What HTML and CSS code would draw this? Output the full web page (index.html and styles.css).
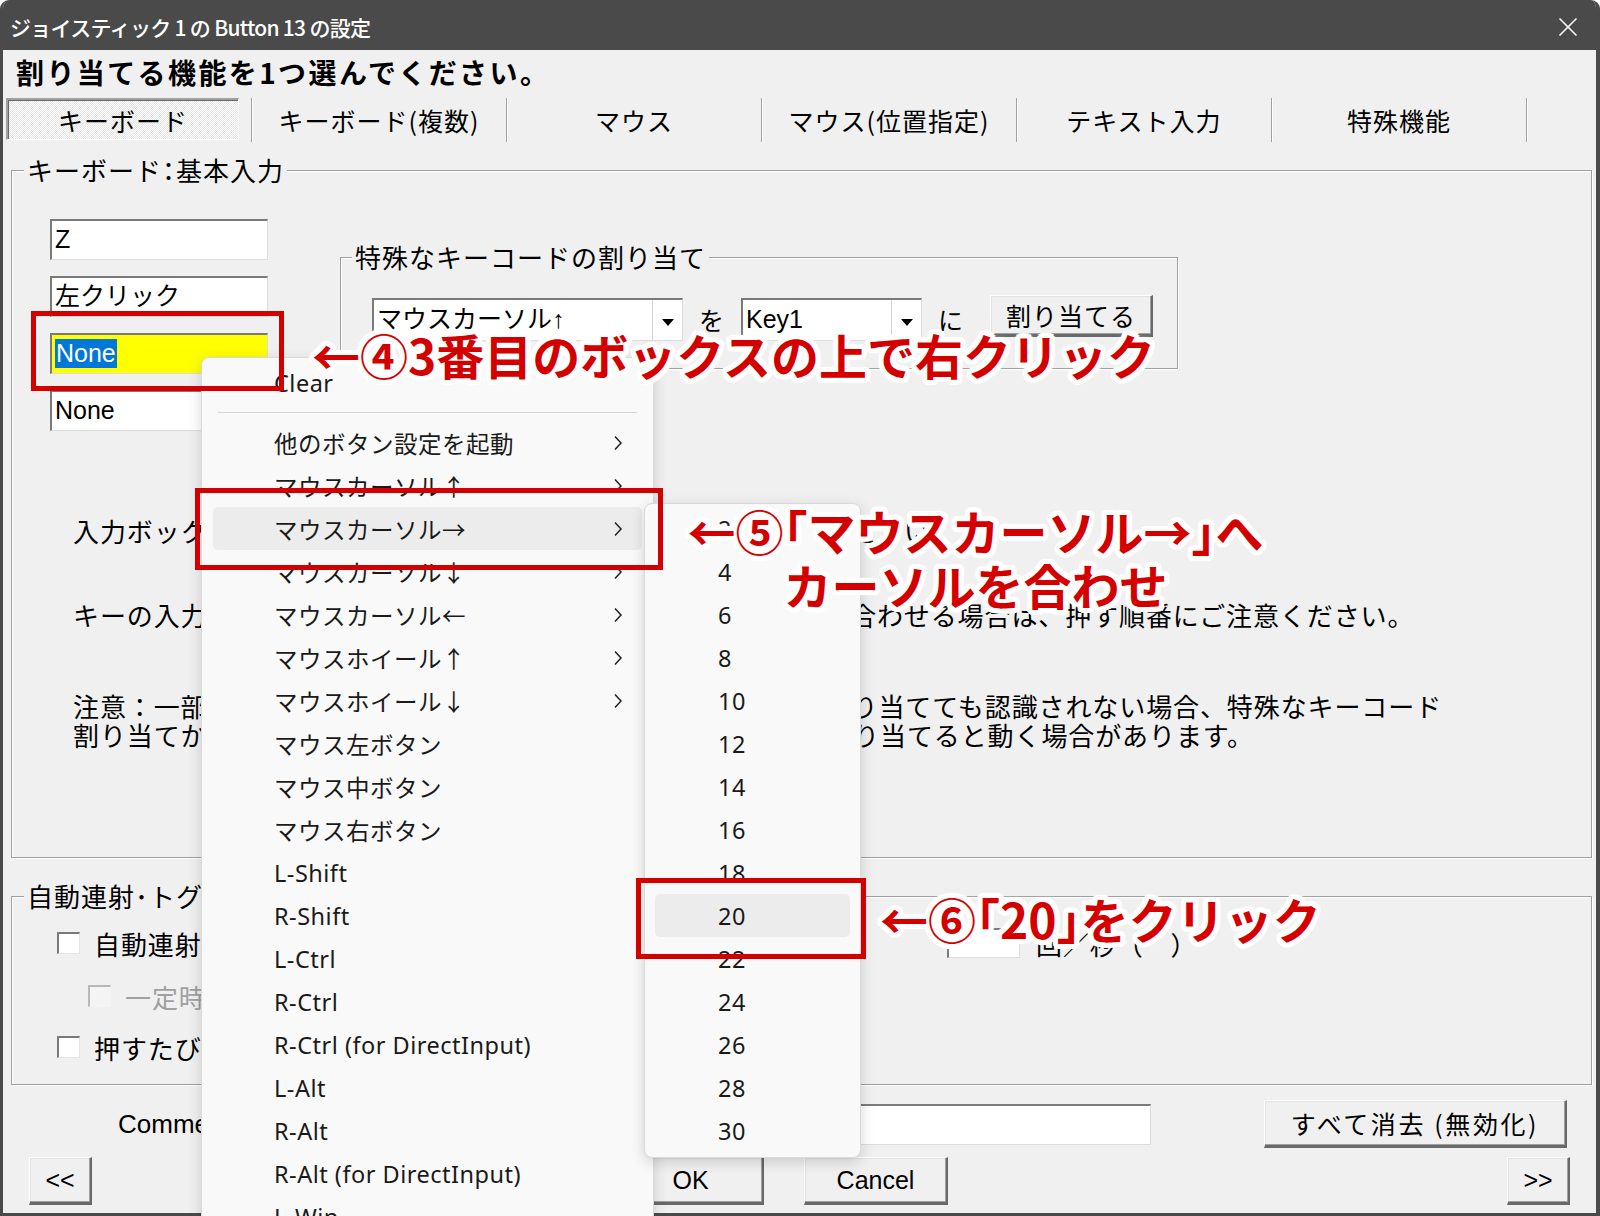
FILE: index.html
```html
<!DOCTYPE html>
<html lang="ja">
<head>
<meta charset="utf-8">
<title>ジョイスティック 1 の Button 13 の設定</title>
<link rel="stylesheet" href="styles.css">
</head>
<body>
<div class="window">
  <div class="titlebar">
    <span class="title">ジョイスティック 1 の Button 13 の設定</span>
    <svg class="close" width="20" height="20" viewBox="0 0 20 20"><path d="M1.5 1.5 L18.5 18.5 M18.5 1.5 L1.5 18.5" stroke="#fff" stroke-width="1.6" fill="none"/></svg>
  </div>
  <div class="client">
    <h1 class="heading">割り当てる機能を1つ選んでください。</h1>
    <div class="tabs">
      <div class="tab first"><span class="tab-sel">キーボード</span></div>
      <div class="tab">キーボード(複数)</div>
      <div class="tab">マウス</div>
      <div class="tab">マウス(位置指定)</div>
      <div class="tab">テキスト入力</div>
      <div class="tab">特殊機能</div>
    </div>

    <fieldset class="group main-group">
      <legend>キーボード<span class="hw">：</span>基本入力</legend>
      <div class="top-row">
        <div class="key-inputs">
          <div class="field">Z</div>
          <div class="field">左クリック</div>
          <div class="field yellow"><span class="sel">None</span></div>
          <div class="field">None</div>
        </div>
        <fieldset class="group special">
          <legend>特殊なキーコードの割り当て</legend>
          <div class="special-row">
            <div class="combo c1"><span class="val">マウスカーソル↑</span><span class="drop"><svg width="12" height="7" viewBox="0 0 12 7"><path d="M0 0 H12 L6 7 Z" fill="#000"/></svg></span></div>
            <span class="conj">を</span>
            <div class="combo c2"><span class="val">Key1</span><span class="drop"><svg width="12" height="7" viewBox="0 0 12 7"><path d="M0 0 H12 L6 7 Z" fill="#000"/></svg></span></div>
            <span class="conj">に</span>
            <button class="btn assign">割り当てる</button>
          </div>
        </fieldset>
      </div>
      <div class="notes">
        <p class="note n1">入力ボックスをクリックしてから、割り当てたいキーを押してください。</p>
        <p class="note n2">キーの入力は順番が重要です。複数のキーを同時押しなどで組み合わせる場合は、押す順番にご注意ください。</p>
        <p class="note n3">注意：一部のゲームでは、上の入力ボックスで普通にキーを再割り当てても認識されない場合、特殊なキーコード<br>割り当てから別のキーコードを選び、そのキーコードをキーに割り当てると動く場合があります。</p>
      </div>
    </fieldset>

    <fieldset class="group auto-group">
      <legend>自動連射･トグル設定</legend>
      <div class="ck-row r1">
        <span class="ck"></span>
        <span class="ck-text wide">自動連射（連打）を有効にする</span>
        <span class="small-field"></span>
        <span class="ck-after">回／秒（　）</span>
      </div>
      <div class="ck-row r2 disabled">
        <span class="ck"></span>
        <span class="ck-text">一定時間押し続けたときだけ連射する</span>
      </div>
      <div class="ck-row r3">
        <span class="ck"></span>
        <span class="ck-text">押すたびにオン・オフを切り替える（トグル）</span>
      </div>
    </fieldset>

    <div class="comment-row">
      <span class="comment-label">Comment:</span>
      <span class="field comment-field"></span>
      <button class="btn clear-all">すべて消去 (無効化)</button>
    </div>

    <div class="bottom-row">
      <button class="btn nav prev">&lt;&lt;</button>
      <button class="btn ok">OK</button>
      <button class="btn cancel">Cancel</button>
      <button class="btn nav next">&gt;&gt;</button>
    </div>
  </div>
</div>

<div class="menu ctx">
  <div class="mi">Clear</div>
  <div class="sep"></div>
  <div class="mi">他のボタン設定を起動<svg class="chev" width="10" height="16" viewBox="0 0 10 16"><path d="M2 1.5 L8 8 L2 14.5" stroke="#222" stroke-width="1.5" fill="none"/></svg></div>
  <div class="mi">マウスカーソル↑<svg class="chev" width="10" height="16" viewBox="0 0 10 16"><path d="M2 1.5 L8 8 L2 14.5" stroke="#222" stroke-width="1.5" fill="none"/></svg></div>
  <div class="mi hl">マウスカーソル→<svg class="chev" width="10" height="16" viewBox="0 0 10 16"><path d="M2 1.5 L8 8 L2 14.5" stroke="#222" stroke-width="1.5" fill="none"/></svg></div>
  <div class="mi">マウスカーソル↓<svg class="chev" width="10" height="16" viewBox="0 0 10 16"><path d="M2 1.5 L8 8 L2 14.5" stroke="#222" stroke-width="1.5" fill="none"/></svg></div>
  <div class="mi">マウスカーソル←<svg class="chev" width="10" height="16" viewBox="0 0 10 16"><path d="M2 1.5 L8 8 L2 14.5" stroke="#222" stroke-width="1.5" fill="none"/></svg></div>
  <div class="mi">マウスホイール↑<svg class="chev" width="10" height="16" viewBox="0 0 10 16"><path d="M2 1.5 L8 8 L2 14.5" stroke="#222" stroke-width="1.5" fill="none"/></svg></div>
  <div class="mi">マウスホイール↓<svg class="chev" width="10" height="16" viewBox="0 0 10 16"><path d="M2 1.5 L8 8 L2 14.5" stroke="#222" stroke-width="1.5" fill="none"/></svg></div>
  <div class="mi">マウス左ボタン</div>
  <div class="mi">マウス中ボタン</div>
  <div class="mi">マウス右ボタン</div>
  <div class="mi">L-Shift</div>
  <div class="mi">R-Shift</div>
  <div class="mi">L-Ctrl</div>
  <div class="mi">R-Ctrl</div>
  <div class="mi">R-Ctrl (for DirectInput)</div>
  <div class="mi">L-Alt</div>
  <div class="mi">R-Alt</div>
  <div class="mi">R-Alt (for DirectInput)</div>
  <div class="mi">L-Win</div>
</div>

<div class="menu sub">
  <div class="mi">2</div>
  <div class="mi">4</div>
  <div class="mi">6</div>
  <div class="mi">8</div>
  <div class="mi">10</div>
  <div class="mi">12</div>
  <div class="mi">14</div>
  <div class="mi">16</div>
  <div class="mi">18</div>
  <div class="mi hl">20</div>
  <div class="mi">22</div>
  <div class="mi">24</div>
  <div class="mi">26</div>
  <div class="mi">28</div>
  <div class="mi">30</div>
</div>

<div class="rbox b1"></div>
<div class="rbox b2"></div>
<div class="rbox b3"></div>

<div class="ann a1">←④3番目のボックスの上で右クリック</div>
<div class="ann a2">←⑤<span class="hw">「</span>マウスカーソル→<span class="hw">」</span>へ<br>カーソルを合わせ</div>
<div class="ann a3">←⑥<span class="hw">「</span>20<span class="hw">」</span>をクリック</div>
</body>
</html>
```

FILE: styles.css
```css
* { box-sizing: border-box; }
html, body { margin: 0; padding: 0; }
body {
  width: 1600px;
  height: 1216px;
  overflow: hidden;
  position: relative;
  background: #ffffff;
  font-family: "Noto Sans CJK JP", sans-serif;
  color: #000;
}

.hw { font-feature-settings: "halt"; }

.window {
  width: 1600px;
  height: 1216px;
  background: #f0f0f0;
  border-style: solid;
  border-color: #4a4a4a;
  border-width: 0 4px 3px 3px;
  border-radius: 9px 9px 0 0;
  overflow: hidden;
}

.titlebar {
  height: 50px;
  margin: 0 -4px 0 -3px;
  background: #4a4a4a;
  display: flex;
  align-items: center;
  justify-content: space-between;
  padding: 4px 22px 0 10px;
  color: #fff;
}
.title {
  font-size: 21px;
  font-weight: 500;
  letter-spacing: -0.7px;
  line-height: 28px;
}

.client { display: block; }

.heading {
  margin: 0;
  height: 46px;
  line-height: 44px;
  padding-left: 13px;
  font-size: 28px;
  font-weight: 700;
  letter-spacing: 2.4px;
}

.tabs {
  display: flex;
  height: 48px;
}
.tab {
  width: 255px;
  height: 44px;
  margin-top: 2px;
  display: flex;
  align-items: center;
  justify-content: center;
  font-size: 25px;
  letter-spacing: 1px;
  border-right: 1px solid #a0a0a0;
  box-shadow: 1px 0 0 #ffffff;
}
.tab.first {
  width: 249px;
  justify-content: flex-start;
  padding-left: 3px;
}
.tab-sel {
  width: 233px;
  height: 42px;
  display: flex;
  align-items: center;
  justify-content: center;
  background-color: #fff;
  background-image: repeating-conic-gradient(#e4e4e4 0 25%, #ffffff 0 50%);
  background-size: 2px 2px;
  border-style: solid;
  border-width: 2px 1px 1px 2px;
  border-color: #a0a0a0 #ffffff #ffffff #a0a0a0;
  box-shadow: inset 1px 1px 0 #696969;
  margin-top: -2px;
}

.group {
  margin: 0;
  padding: 0;
  min-width: 0;
  border: 1px solid #a0a0a0;
  box-shadow: inset 1px 1px 0 #ffffff, 1px 1px 0 #ffffff;
}
.group legend {
  margin-left: 12px;
  padding: 0 3px;
  font-size: 26px;
  line-height: 30px;
  letter-spacing: 1px;
  background: #f0f0f0;
}

.main-group {
  margin: 11px 4px 0 8px;
  height: 703px;
}

.top-row {
  display: flex;
  align-items: flex-start;
}
.key-inputs {
  display: flex;
  flex-direction: column;
  gap: 16px;
  margin: 34px 0 0 38px;
  width: 218px;
}
.field {
  display: block;
  height: 41px;
  background: #ffffff;
  border-style: solid;
  border-width: 2px 1px 1px 2px;
  border-color: #7a7a7a #dcdcdc #dcdcdc #7a7a7a;
  font-family: "Liberation Sans", "Noto Sans CJK JP", sans-serif;
  font-size: 25px;
  line-height: 37px;
  padding-left: 3px;
  white-space: nowrap;
}
.field.yellow { background: #ffff00; }
.sel {
  display: inline-block;
  background: #0078d7;
  color: #fff;
  line-height: 29px;
  padding: 0 1px;
  margin-top: 4px;
  vertical-align: top;
}

.special {
  margin: 57px 0 0 72px;
  width: 838px;
  height: 127px;
}
.special legend { margin-left: 11px; }
.special-row {
  display: flex;
  align-items: flex-start;
  margin: 23px 0 0 31px;
}
.combo {
  height: 43px;
  margin-top: 3px;
  display: flex;
  background: #fff;
  border-style: solid;
  border-width: 2px 1px 1px 2px;
  border-color: #7a7a7a #dcdcdc #dcdcdc #7a7a7a;
  font-family: "Liberation Sans", "Noto Sans CJK JP", sans-serif;
  font-size: 25px;
  line-height: 38px;
}
.combo .val { flex: 1; padding-left: 3px; white-space: nowrap; overflow: hidden; }
.combo .drop {
  width: 30px;
  display: flex;
  align-items: center;
  justify-content: center;
  border-left: 1px solid #d0d0d0;
  padding-top: 4px;
}
.c1 { width: 311px; }
.c2 { width: 181px; }
.conj {
  font-size: 25px;
  line-height: 43px;
  margin-top: 3px;
  padding: 0 17px 0 16px;
}
.conj + .combo + .conj { padding-right: 27px; }

.btn {
  display: flex;
  align-items: center;
  justify-content: center;
  padding: 0;
  background: #f0f0f0;
  color: #000;
  font-family: "Liberation Sans", "Noto Sans CJK JP", sans-serif;
  font-size: 25px;
  border-style: solid;
  border-width: 1px 2px 3px 1px;
  border-color: #ffffff #696969 #696969 #ffffff;
  box-shadow: inset -1px -1px 0 #a0a0a0, inset 1px 1px 0 #e3e3e3;
  white-space: nowrap;
}
.assign {
  width: 163px;
  height: 42px;
  letter-spacing: 1px;
}

.notes {
  margin-left: 61px;
  font-size: 26px;
  letter-spacing: 0.9px;
  white-space: nowrap;
}
.note { margin: 0; }
.n1 { margin-top: 85px; line-height: 30px; }
.n2 { margin-top: 54px; line-height: 30px; }
.n3 { margin-top: 61px; line-height: 29px; }

.auto-group {
  margin: 23px 4px 0 8px;
  height: 204px;
}
.ck-row {
  display: flex;
  align-items: center;
  height: 30px;
  font-size: 26px;
  letter-spacing: 0.9px;
  white-space: nowrap;
}
.r1 { margin: 17px 0 0 45px; }
.r2 { margin: 23px 0 0 76px; }
.r3 { margin: 21px 0 0 45px; }
.ck {
  width: 23px;
  height: 22px;
  flex: 0 0 auto;
  background: #fff;
  border-style: solid;
  border-width: 2px 1px 1px 2px;
  border-color: #7a7a7a #e3e3e3 #e3e3e3 #7a7a7a;
}
.ck-text { margin-left: 14px; }
.ck-text.wide { width: 853px; flex: 0 0 853px; overflow: hidden; }
.disabled .ck { background: #f4f4f4; border-color: #b8b8b8 #f4f4f4 #f4f4f4 #b8b8b8; }
.disabled .ck-text { color: #a0a0a0; }
.small-field {
  width: 73px;
  height: 30px;
  background: #fff;
  border-style: solid;
  border-width: 2px 1px 1px 2px;
  border-color: #7a7a7a #dcdcdc #dcdcdc #7a7a7a;
}
.ck-after { margin-left: 16px; }

.comment-row {
  display: flex;
  align-items: center;
  margin-top: 15px;
  height: 48px;
}
.comment-label {
  width: 122px;
  margin-left: 115px;
  font-family: "Liberation Sans", sans-serif;
  font-size: 26px;
}
.comment-field { width: 911px; }
.clear-all {
  margin-left: 113px;
  width: 303px;
  height: 48px;
  font-family: "Noto Sans CJK JP", sans-serif;
  letter-spacing: 2.6px;
}

.bottom-row {
  display: flex;
  align-items: center;
  margin-top: 9px;
  height: 48px;
}
.bottom-row .btn { height: 48px; }
.prev { margin-left: 26px; width: 63px; }
.ok { margin-left: 526px; width: 146px; }
.cancel { margin-left: 40px; width: 144px; }
.next { margin-left: 559px; width: 63px; }

/* context menus (overlays) */
.menu {
  position: absolute;
  background: #f9f9f9;
  border: 1px solid #dadada;
  border-radius: 8px;
  box-shadow: 0 4px 14px rgba(0, 0, 0, 0.16);
  font-family: "Noto Sans", "Noto Sans CJK JP", sans-serif;
  font-size: 23.5px;
  letter-spacing: 0.5px;
  color: #1a1a1a;
}
.ctx {
  left: 201px;
  top: 357px;
  width: 453px;
  height: 880px;
  padding: 3px 11px;
}
.sub {
  left: 644px;
  top: 503px;
  width: 217px;
  height: 655px;
  padding: 3px 10px;
}
.mi {
  height: 43px;
  display: flex;
  align-items: center;
  border-radius: 5px;
  white-space: nowrap;
}
.ctx .mi { padding: 0 19px 0 61px; }
.sub .mi { padding-left: 63px; }
.mi.hl { background: #ececec; }
.chev { margin-left: auto; }
.sep {
  height: 17px;
  margin: 0 5px;
  display: flex;
  align-items: center;
}
.sep::before {
  content: "";
  display: block;
  width: 100%;
  height: 1px;
  background: #d6d6d6;
}

/* red highlight boxes */
.rbox {
  position: absolute;
  border: 5px solid #d40000;
}
.b1 { left: 31px; top: 311px; width: 253px; height: 80px; }
.b2 { left: 195px; top: 488px; width: 468px; height: 82px; }
.b3 { left: 636px; top: 878px; width: 230px; height: 81px; }

/* annotations */
.ann {
  position: absolute;
  font-family: "Noto Sans CJK JP", sans-serif;
  font-weight: 700;
  font-size: 48px;
  line-height: 56px;
  color: #d40000;
  white-space: nowrap;
  text-shadow:
    5px 0 0 #fff, -5px 0 0 #fff, 0 5px 0 #fff, 0 -5px 0 #fff,
    4px 4px 0 #fff, -4px 4px 0 #fff, 4px -4px 0 #fff, -4px -4px 0 #fff,
    2px 0 0 #fff, -2px 0 0 #fff, 0 2px 0 #fff, 0 -2px 0 #fff,
    5px 2px 0 #fff, -5px 2px 0 #fff, 5px -2px 0 #fff, -5px -2px 0 #fff,
    2px 5px 0 #fff, -2px 5px 0 #fff, 2px -5px 0 #fff, -2px -5px 0 #fff,
    0 0 8px #fff;
}
.a1 { left: 312px; top: 326px; }
.a2 { left: 686px; top: 503px; width: 579px; text-align: center; line-height: 54px; }
.a3 { left: 880px; top: 890px; }
```
